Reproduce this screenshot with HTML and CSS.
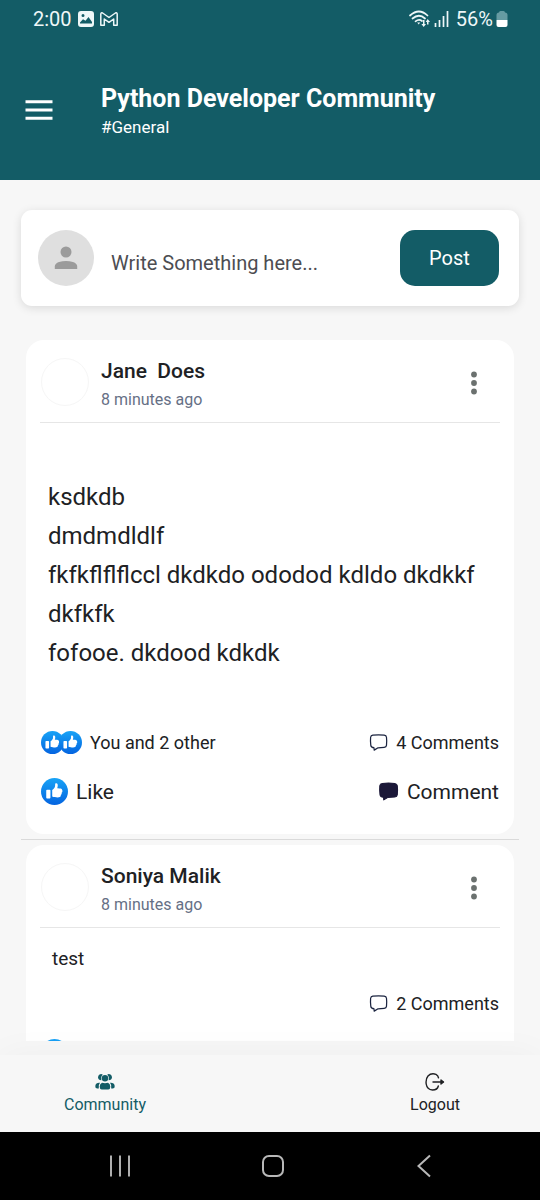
FILE: index.html
```html
<!DOCTYPE html>
<html lang="en">
<head>
<meta charset="utf-8">
<meta name="viewport" content="width=device-width, initial-scale=1">
<title>Python Developer Community</title>
<link rel="stylesheet" href="styles.css">
</head>
<body>
<svg class="defs" width="0" height="0" aria-hidden="true">
  <defs>
    <linearGradient id="blue" x1="0" y1="0" x2="0" y2="1">
      <stop offset="0" stop-color="#18a3f6"/>
      <stop offset="1" stop-color="#0464e0"/>
    </linearGradient>
    <symbol id="thumb" viewBox="0 0 16 16">
      <circle cx="8" cy="8" r="8" fill="url(#blue)"/>
      <path fill="#fff" d="M12.5 7.100c.2.250.250.450.200.800 0 .4-.25.7-.51.86.08.14.11.33.07.53-.06.33-.29.59-.57.72.06.14.09.3.06.5-.1.6-.82 1-1.9 1-1.150 0-2.300-.1-3.200-.5V7.100c.8-.5 1.600-1.400 1.700-2.300 0-.55-.03-1.050.1-1.420.2-.42 1.250-.38 1.450.62.12.7-.1 1.450-.3 2.100.6.1 1.700 0 2.100.1.350.05.9.4.8.900zM3.600 6.900h1.500c.33 0 .5.17.5.5v4.200c0 .33-.17.5-.5.5H3.600c-.33 0-.5-.17-.5-.5V7.400c0-.33.17-.5.5-.5z"/>
    </symbol>
    <symbol id="bubble" viewBox="0 0 20 20">
      <path d="M4 2.300Q10 1.700 16 2.300Q18.200 2.600 18.400 4.500Q18.900 9 18.400 13Q18.200 14.900 16 15.200Q12.500 15.600 9.500 15.600L5.500 18L5.200 15.500Q2.200 15.300 1.900 13Q1.300 9 1.700 4.500Q2 2.600 4 2.300Z" stroke-linejoin="round"/>
    </symbol>
    <symbol id="dots" viewBox="0 0 8 24">
      <circle cx="4" cy="3.500" r="2.900"/><circle cx="4" cy="12" r="2.900"/><circle cx="4" cy="20.500" r="2.900"/>
    </symbol>
  </defs>
</svg>
<div class="app">
  <header class="header">
    <div class="status">
      <div class="status-group">
        <span>2:00</span>
        <svg width="16" height="16" viewBox="0 0 16 16"><path fill="#eef7f8" fill-rule="evenodd" d="M3 0h10a3 3 0 0 1 3 3v10a3 3 0 0 1-3 3H3a3 3 0 0 1-3-3V3a3 3 0 0 1 3-3zM2 12.500h12V11L10.500 6 7.500 9.800 5 8.200 2 11.500zM5 3a1.500 1.500 0 1 0 0 3 1.500 1.500 0 0 0 0-3z"/></svg>
        <svg width="18" height="14" viewBox="0 0 18 14"><path fill="none" stroke="#eef7f8" stroke-width="1.500" stroke-linejoin="round" d="M.8 13.200V2.200Q1 .3 2.600 1L9 5.500 15.400 1Q17 .3 17.200 2.200V13.200H13.700V7L9 10.300 4.300 7V13.200Z"/></svg>
      </div>
      <div class="status-group status-right">
        <svg width="22" height="18" viewBox="0 0 22 18" fill="none" stroke="#eef7f8" stroke-width="1.700" stroke-linecap="round"><path d="M1 5.500Q10 -2.500 18.500 5.500M3.500 8.500Q10 3 16 8.500M6.500 11.300Q10 8.500 13 11"/><path fill="#eef7f8" stroke="none" d="M8.200 12.500h3l-1.500 2zM14 10h1.500v4H17l-2.300 3-2.300-3H14zM19.500 14.500H18V12h-1.300l2-3 2.300 3h-1.500z"/></svg>
        <svg width="15" height="16" viewBox="0 0 15 16" stroke="#eef7f8" stroke-width="1.700"><path d="M1.500 12v4M5.500 9v7M9.500 5v11M13.500 0v16"/></svg>
        <span class="battery-text">56%</span>
        <svg width="12" height="16" viewBox="0 0 12 16"><path fill="#669ba2" d="M3 1.500Q3 0 4.500 0h3Q9 0 9 1.500 11.500 1.500 11.500 4v5H.5V4Q.5 1.500 3 1.500z"/><path fill="#fff" d="M.5 9h11v5q0 2-2 2h-7q-2 0-2-2z"/></svg>
      </div>
    </div>
    <div class="title-bar">
      <button class="menu" type="button" aria-label="Menu"><svg width="28" height="20" viewBox="0 0 28 20" stroke="#fff" stroke-width="3"><path d="M.5 1.800h27M.5 10h27M.5 18.200h27"/></svg></button>
      <div>
        <h1 class="title">Python Developer Community</h1>
        <p class="channel">#General</p>
      </div>
    </div>
  </header>

  <main class="main">
    <div class="feed">
      <form class="composer">
        <span class="user"><svg width="24" height="24" viewBox="0 0 24 24" fill="#9b9b9b"><circle cx="12" cy="6" r="5.500"/><path d="M.8 23v-2.500Q.8 17.500 5 16q7-2 14 0 4.200 1.500 4.200 4.500V23z"/></svg></span>
        <input class="composer-input" type="text" aria-label="Write Something here..." placeholder="Write Something here...">
        <button class="post-button" type="button">Post</button>
      </form>

      <article class="card">
        <div class="card-head">
          <span class="avatar"></span>
          <div class="who">
            <h2 class="name">Jane&nbsp; Does</h2>
            <p class="time">8 minutes ago</p>
          </div>
          <button class="more" type="button" aria-label="More"><svg width="8" height="24"><use href="#dots"/></svg></button>
        </div>
        <p class="text-large">ksdkdb<br>dmdmdldlf<br>fkfkflflflccl dkdkdo ododod kdldo dkdkkf dkfkfk<br>fofooe. dkdood kdkdk</p>
        <div class="counts">
          <span class="likes"><svg width="23" height="23"><use href="#thumb"/></svg><svg class="second" width="23" height="23"><use href="#thumb"/></svg>You and 2 other</span>
          <span class="comments"><svg class="outline" width="19" height="19"><use href="#bubble"/></svg>4 Comments</span>
        </div>
        <div class="actions">
          <button class="action" type="button"><svg width="27" height="27"><use href="#thumb"/></svg>Like</button>
          <button class="action" type="button"><svg class="solid" width="21" height="21"><use href="#bubble"/></svg>Comment</button>
        </div>
      </article>

      <hr class="rule">

      <article class="card">
        <div class="card-head">
          <span class="avatar"></span>
          <div class="who">
            <h2 class="name">Soniya Malik</h2>
            <p class="time">8 minutes ago</p>
          </div>
          <button class="more" type="button" aria-label="More"><svg width="8" height="24"><use href="#dots"/></svg></button>
        </div>
        <p class="text-small">test</p>
        <div class="counts">
          <span class="comments"><svg class="outline" width="19" height="19"><use href="#bubble"/></svg>2 Comments</span>
        </div>
        <div class="actions">
          <svg width="27" height="27"><use href="#thumb"/></svg>
        </div>
      </article>
    </div>
  </main>

  <nav class="tabs">
    <a class="tab tab-active" href="#community">
      <svg width="20" height="18" viewBox="0 0 20 18" fill="currentColor"><path d="M4.500 1.500Q6.500.5 7.800 1.800 5.500 3.500 6.400 7.300 3.200 7 3 4.500 3 2.300 4.500 1.500zM15.500 1.500Q13.500.5 12.200 1.800 14.500 3.500 13.600 7.300 16.800 7 17 4.500 17 2.300 15.500 1.500zM1.500 10.500Q3 9.500 5 9.800 3.300 11.500 3.800 15.500H2Q0 15 .3 13 .5 11.300 1.500 10.500zM18.500 10.500Q17 9.500 15 9.800 16.700 11.500 16.200 15.500H18Q20 15 19.700 13 19.500 11.300 18.500 10.500z"/><circle cx="10" cy="5.200" r="3.200"/><path d="M7 9.800q3 .8 6 0 2.300 1 2.300 4 0 2.700-2 2.700H6.700q-2 0-2-2.700 0-3 2.300-4z"/></svg>
      Community
    </a>
    <a class="tab" href="#logout">
      <svg width="20" height="18" viewBox="0 0 20 18" fill="none" stroke="currentColor" stroke-width="1.400" stroke-linecap="round"><path d="M13.500 4.800Q13.200 2.500 11 1.300 6-.2 3 3 .5 6 1.200 11 2 16.500 7.500 17 12.500 17 13.300 13M8 9h10"/><path fill="currentColor" stroke-linejoin="round" d="M16 7l2.500 2L16 11z"/></svg>
      Logout
    </a>
  </nav>

  <div class="system">
    <button class="system-button" type="button" aria-label="Recents"><svg width="22" height="24" viewBox="0 0 22 24" stroke="#aeaeae" stroke-width="2"><path d="M2 1.500v21M11 1.500v21M20 1.500v21"/></svg></button>
    <button class="system-button" type="button" aria-label="Home"><svg width="24" height="24" viewBox="0 0 24 24" fill="none" stroke="#b8b8b8" stroke-width="2"><rect x="2" y="2" width="20" height="20" rx="6"/></svg></button>
    <button class="system-button" type="button" aria-label="Back"><svg width="24" height="24" viewBox="0 0 24 24" fill="none" stroke="#b8b8b8" stroke-width="2"><path d="M18 1.500L6.500 12 18 22.500"/></svg></button>
  </div>
</div>
</body>
</html>
```

FILE: styles.css
```css
* { box-sizing: border-box; }
body, h1, h2, p { margin: 0; }
body {
  font-family: Roboto, "Liberation Sans", sans-serif;
  color: #202124;
  background: #f7f7f7;
}
button {
  font: inherit;
  color: inherit;
  background: none;
  border: 0;
  padding: 0;
}
svg { display: block; flex: none; }
.defs { position: absolute; }

.app {
  display: flex;
  flex-direction: column;
  height: 100vh;
}

/* Header */
.header {
  flex: none;
  color: #fff;
  background: #135c66;
  padding-bottom: 42px;
}
.status {
  display: flex;
  justify-content: space-between;
  height: 38px;
  padding: 0 32px 0 33px;
  font-size: 20px;
  color: #eef7f8;
}
.status-group {
  display: flex;
  align-items: center;
  gap: 6px;
}
.status-right { gap: 3px; }
.battery-text { margin-left: 4px; }
.title-bar {
  display: flex;
  align-items: center;
  gap: 48px;
  padding: 44px 25px 0;
}
.title {
  font-size: 25px;
  line-height: 34px;
  font-weight: 700;
}
.channel {
  font-size: 17px;
  line-height: 22px;
}

/* Feed */
.main {
  flex: 1;
  min-height: 0;
  display: flex;
  flex-direction: column;
  padding-bottom: 14px;
}
.feed {
  flex: 1;
  min-height: 0;
  overflow: hidden;
  padding: 30px 21px 0;
}
.composer {
  display: flex;
  align-items: center;
  gap: 17px;
  padding: 20px 20px 20px 17px;
  margin-bottom: 34px;
  background: #fff;
  border-radius: 11px;
  box-shadow: 0 2px 10px rgba(0, 0, 0, 0.12);
}
.user {
  display: grid;
  place-items: center;
  flex: none;
  width: 56px;
  height: 56px;
  border-radius: 50%;
  background: #dfdfdf;
}
.composer-input {
  flex: 1;
  min-width: 0;
  height: 56px;
  padding: 10px 0 0;
  border: 0;
  outline: 0;
  background: none;
  font: inherit;
  font-size: 20px;
}
.composer-input::placeholder { color: #4d4d52; opacity: 1; }
.post-button {
  width: 99px;
  height: 56px;
  border-radius: 15px;
  background: #135c66;
  color: #fff;
  font-size: 20px;
}

.card {
  margin: 0 5px;
  padding: 0 14px 29px;
  background: #fff;
  border-radius: 18px;
}
.card-head {
  display: flex;
  align-items: center;
  gap: 12px;
  height: 83px;
  padding: 2px 22px 0 1px;
  border-bottom: 1px solid #e6e6e6;
}
.avatar {
  width: 48px;
  height: 48px;
  border: 1px solid #f6f6f6;
  border-radius: 50%;
}
.who {
  flex: 1;
  padding-top: 6px;
}
.name {
  font-size: 21px;
  line-height: 30px;
  font-weight: 500;
}
.time {
  font-size: 16px;
  line-height: 28px;
  color: #667085;
}
.more { fill: #6b716f; padding-top: 2px; }
.text-large {
  padding: 55px 8px 55px;
  font-size: 24px;
  line-height: 39px;
}
.text-small {
  padding: 18px 12px 17px;
  font-size: 19px;
  line-height: 26px;
}
.counts {
  display: flex;
  align-items: center;
  height: 28px;
  padding: 0 1px;
  font-size: 18px;
}
.likes, .comments, .action {
  display: flex;
  align-items: center;
  gap: 8px;
}
.second { margin-left: -13px; }
.comments { margin-left: auto; }
.outline { fill: none; stroke: #1b2440; stroke-width: 1.3px; }
.solid { fill: #1b1838; stroke: #1b1838; }
.actions {
  display: flex;
  justify-content: space-between;
  align-items: center;
  margin-top: 22px;
  padding: 0 1px;
  font-size: 21px;
}
.action { height: 27px; }
.rule {
  height: 1px;
  margin: 5px 0;
  border: 0;
  background: #dadada;
}

/* Bottom tabs */
.tabs {
  position: relative;
  flex: none;
  display: flex;
  justify-content: space-between;
  padding: 18px 60px 16px;
  background: #f7f7f7;
  box-shadow: 0 0 36px rgba(0, 0, 0, 0.04);
}
.tab {
  display: flex;
  flex-direction: column;
  align-items: center;
  gap: 3px;
  min-width: 90px;
  font-size: 16px;
  line-height: 22px;
  color: #202124;
  text-decoration: none;
}
.tab-active { color: #135c66; }

.system {
  flex: none;
  display: flex;
  justify-content: space-between;
  padding: 22px 104px 22px 109px;
  background: #000;
}
.system-button { min-width: 24px; }
```
